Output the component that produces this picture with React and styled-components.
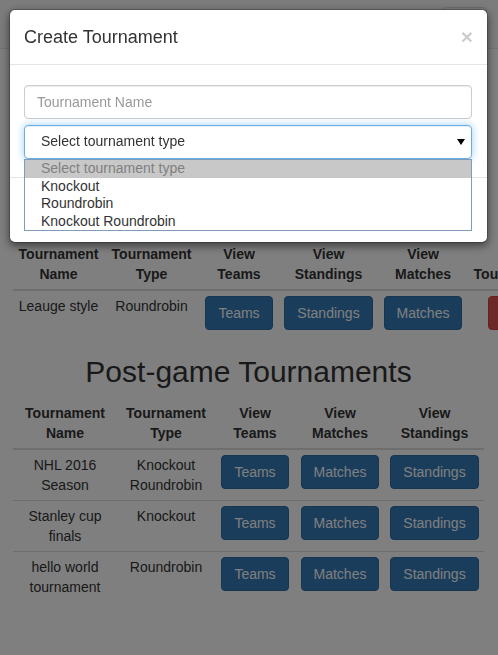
import React from 'react';
import styled, { createGlobalStyle, css } from 'styled-components';

const GlobalStyle = createGlobalStyle`
  html, body {
    margin: 0;
    padding: 0;
    background: #fff;
    overflow: hidden;
  }
  body {
    font-family: "Liberation Sans", Arial, Helvetica, sans-serif;
    font-size: 14px;
    line-height: 1.42857;
    color: #333;
  }
  * { box-sizing: border-box; }
`;

const ongoing = [
  { name: 'Leauge style', type: 'Roundrobin' },
];

const postGame = [
  { name: 'NHL 2016 Season', type: 'Knockout Roundrobin' },
  { name: 'Stanley cup finals', type: 'Knockout' },
  { name: 'hello world tournament', type: 'Roundrobin' },
];

const typeOptions = ['Select tournament type', 'Knockout', 'Roundrobin', 'Knockout Roundrobin'];

export default function App() {
  return (
    <>
      <GlobalStyle />
      <StNavbar>
        <StToggle>
          <StBar /><StBar /><StBar />
        </StToggle>
      </StNavbar>

      <StContainer>
        <StTable $width="546px">
          <thead>
            <tr>
              <StTh $w={91}>Tournament Name</StTh>
              <StTh $w={95}>Tournament Type</StTh>
              <StTh $w={80}>View Teams</StTh>
              <StTh $w={99}>View Standings</StTh>
              <StTh $w={90}>View Matches</StTh>
              <StTh $w={91}>End Tournament</StTh>
            </tr>
          </thead>
          <tbody>
            {ongoing.map(t => (
              <tr key={t.name}>
                <StTd>{t.name}</StTd>
                <StTd>{t.type}</StTd>
                <StTd><StBtn $variant="primary">Teams</StBtn></StTd>
                <StTd><StBtn $variant="primary">Standings</StBtn></StTd>
                <StTd><StBtn $variant="primary">Matches</StBtn></StTd>
                <StTd><StBtn $variant="danger">End</StBtn></StTd>
              </tr>
            ))}
          </tbody>
        </StTable>

        <StSectionTitle>Post-game Tournaments</StSectionTitle>

        <StTable>
          <thead>
            <tr>
              <StTh $w={104}>Tournament Name</StTh>
              <StTh $w={98}>Tournament Type</StTh>
              <StTh $w={80}>View Teams</StTh>
              <StTh $w={90}>View Matches</StTh>
              <StTh $w={99}>View Standings</StTh>
            </tr>
          </thead>
          <tbody>
            {postGame.map(t => (
              <tr key={t.name}>
                <StTd>{t.name}</StTd>
                <StTd>{t.type}</StTd>
                <StTd><StBtn $variant="primary">Teams</StBtn></StTd>
                <StTd><StBtn $variant="primary">Matches</StBtn></StTd>
                <StTd><StBtn $variant="primary">Standings</StBtn></StTd>
              </tr>
            ))}
          </tbody>
        </StTable>
      </StContainer>

      <StBackdrop />
      <StModalWrap>
        <StDialog>
          <StHeader>
            <StTitle>Create Tournament</StTitle>
            <StClose>×</StClose>
          </StHeader>

          <StBody>
            <StInput placeholder="Tournament Name" />
            <StSelectWrap>
              <StSelect>
                <span>Select tournament type</span>
                <svg width="8" height="6" viewBox="0 0 8 6">
                  <polygon points="0,0 8,0 4,6" fill="#000" />
                </svg>
              </StSelect>
              <StDropList>
                {typeOptions.map((o, i) => (
                  <StOption key={o} $active={i === 0}>{o}</StOption>
                ))}
              </StDropList>
            </StSelectWrap>
          </StBody>

          <StFooter />
        </StDialog>
      </StModalWrap>
    </>
  );
}

/* page behind the modal */

const StNavbar = styled.div`
  height: 49px;
  background: #f8f8f8;
  border-bottom: 1px solid #e7e7e7;
  display: flex;
  justify-content: flex-end;
  align-items: flex-start;
  padding: 7px 11px 0 0;
`;

const StToggle = styled.div`
  width: 44px;
  height: 34px;
  border: 1px solid #ddd;
  border-radius: 4px;
  display: flex;
  flex-direction: column;
  justify-content: center;
  align-items: center;
  gap: 4px;
`;

const StBar = styled.span`
  width: 22px;
  height: 2px;
  border-radius: 1px;
  background: #888;
`;

const StContainer = styled.div`
  padding: 190px 14px 0 13px;
`;

const StSectionTitle = styled.h2`
  font-size: 30px;
  font-weight: 500;
  line-height: 1.1;
  margin: 20px 0 10px;
  text-align: center;
`;

const StTable = styled.table`
  width: ${p => p.$width || '100%'};
  border-collapse: collapse;
  border-spacing: 0;
  margin-bottom: 20px;
`;

const StTh = styled.th`
  padding: 5px;
  text-align: center;
  vertical-align: bottom;
  font-weight: bold;
  line-height: 20px;
  border-bottom: 2px solid #ddd;
  ${p => p.$w && css`width: ${p.$w}px;`}
`;

const StTd = styled.td`
  padding: 5px;
  text-align: center;
  vertical-align: top;
  line-height: 20px;
  border-top: 1px solid #ddd;
  tbody tr:first-child & {
    border-top: 0;
  }
`;

const variants = {
  primary: css`
    background: #337ab7;
    border-color: #2e6da4;
    color: #fff;
  `,
  danger: css`
    background: #d9534f;
    border-color: #d43f3a;
    color: #fff;
  `,
};

const StBtn = styled.button`
  display: inline-block;
  padding: 6px 12px;
  font-family: inherit;
  font-size: 14px;
  line-height: 20px;
  border: 1px solid;
  border-radius: 4px;
  white-space: nowrap;
  cursor: pointer;
  ${p => variants[p.$variant]}
`;

/* modal */

const StBackdrop = styled.div`
  position: fixed;
  inset: 0;
  background: rgba(0, 0, 0, 0.5);
  z-index: 1040;
`;

const StModalWrap = styled.div`
  position: fixed;
  inset: 0;
  z-index: 1050;
  padding: 9px 10px 0 9px;
`;

const StDialog = styled.div`
  background: #fff;
  border: 1px solid rgba(0, 0, 0, 0.2);
  border-radius: 6px;
  box-shadow: 0 3px 9px rgba(0, 0, 0, 0.5);
  background-clip: padding-box;
`;

const StHeader = styled.div`
  display: flex;
  justify-content: space-between;
  align-items: flex-start;
  padding: 15px 15px 15px 14px;
  border-bottom: 1px solid #e5e5e5;
`;

const StTitle = styled.h4`
  margin: 0;
  font-size: 18px;
  font-weight: 500;
  line-height: 24px;
  color: #333;
`;

const StClose = styled.span`
  font-size: 21px;
  font-weight: bold;
  line-height: 1;
  color: #000;
  opacity: 0.2;
  margin: 1px -1px 0 0;
`;

const StBody = styled.div`
  display: flex;
  flex-direction: column;
  gap: 6px;
  padding: 20px 15px 18px 14px;
`;

const StInput = styled.input`
  display: block;
  width: 100%;
  height: 34px;
  padding: 6px 12px;
  font-family: inherit;
  font-size: 14px;
  color: #555;
  background: #fff;
  border: 1px solid #ccc;
  border-radius: 4px;
  box-shadow: inset 0 1px 1px rgba(0, 0, 0, 0.075);
  outline: none;
  &::placeholder {
    color: #999;
  }
`;

const StSelectWrap = styled.div`
  position: relative;
`;

const StSelect = styled.div`
  display: flex;
  align-items: center;
  justify-content: space-between;
  height: 34px;
  padding: 0 6px 0 16px;
  font-size: 14px;
  color: #333;
  background: #fff;
  border: 1px solid #66afe9;
  border-radius: 4px;
  box-shadow: inset 0 1px 1px rgba(0, 0, 0, 0.075), 0 0 8px rgba(102, 175, 233, 0.6);

  svg {
    display: block;
  }
`;

const StDropList = styled.div`
  position: absolute;
  left: 0;
  right: 0;
  top: 34px;
  z-index: 5;
  background: #fff;
  border: 1px solid #7f9db9;
`;

const StOption = styled.div`
  height: 17.5px;
  line-height: 17.5px;
  padding-left: 16px;
  font-size: 14px;
  color: ${p => (p.$active ? '#808080' : '#333')};
  background: ${p => (p.$active ? '#c8c8c8' : '#fff')};
`;

const StFooter = styled.div`
  height: 65px;
  border-top: 1px solid #e5e5e5;
`;
